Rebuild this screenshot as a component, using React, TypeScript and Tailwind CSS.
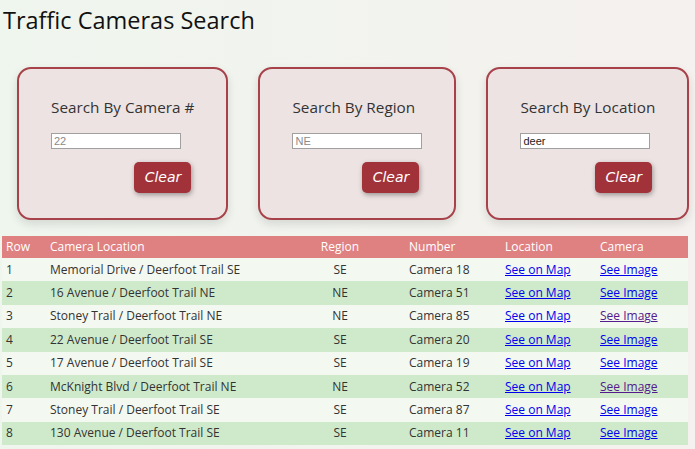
import React from 'react';

type Cam = { row: number; location: string; region: string; number: string; visited?: boolean };

const cameras: Cam[] = [
  { row: 1, location: 'Memorial Drive / Deerfoot Trail SE', region: 'SE', number: 'Camera 18' },
  { row: 2, location: '16 Avenue / Deerfoot Trail NE', region: 'NE', number: 'Camera 51' },
  { row: 3, location: 'Stoney Trail / Deerfoot Trail NE', region: 'NE', number: 'Camera 85', visited: true },
  { row: 4, location: '22 Avenue / Deerfoot Trail SE', region: 'SE', number: 'Camera 20' },
  { row: 5, location: '17 Avenue / Deerfoot Trail SE', region: 'SE', number: 'Camera 19' },
  { row: 6, location: 'McKnight Blvd / Deerfoot Trail NE', region: 'NE', number: 'Camera 52', visited: true },
  { row: 7, location: 'Stoney Trail / Deerfoot Trail SE', region: 'SE', number: 'Camera 87' },
  { row: 8, location: '130 Avenue / Deerfoot Trail SE', region: 'SE', number: 'Camera 11' },
];

function SearchCard({ title, placeholder, value }: { title: string; placeholder?: string; value?: string }) {
  return (
    <div className="flex flex-col h-[153px] border-2 border-[#a8424a] rounded-[14px] bg-[#eee3e3] shadow-[0_4px_10px_rgba(0,0,0,0.12)] px-[32px] pt-[27px]">
      <h2 className="text-[15.3px] leading-[22px] text-[#333] whitespace-nowrap">{title}</h2>
      <input
        readOnly
        value={value}
        placeholder={placeholder}
        className="mt-[15px] w-[130px] h-[16px] bg-white border border-[#a0a0a0] text-[11px] leading-[14px] px-[2px] text-[#222] placeholder:text-[#8a8a8a] font-['Liberation_Sans',sans-serif] outline-none"
      />
      <div className="flex justify-end mt-[13px] pr-[3px]">
        <button className="w-[57px] h-[31px] rounded-[5px] bg-[#a2323a] text-white italic text-[14px] font-['Comic_Sans_MS','DejaVu_Sans',cursive] shadow-[1px_2px_5px_rgba(0,0,0,0.35)]">
          Clear
        </button>
      </div>
    </div>
  );
}

export default function App() {
  return (
    <div className="min-h-[449px] w-full bg-gradient-to-r from-[#eff6ee] to-[#f5f1ee] font-['Open_Sans',sans-serif] text-[#222] overflow-hidden">
      <h1 className="text-[23.5px] leading-[40px] pl-[3px] text-[#111]">Traffic Cameras Search</h1>
      <div className="flex gap-[30px] pl-[17px] mt-[27px]">
        <SearchCard title="Search By Camera #" placeholder="22" />
        <SearchCard title="Search By Region" placeholder="NE" />
        <SearchCard title="Search By Location" value="deer" />
      </div>
      <table className="ml-[2px] mt-[16px] w-[686px] table-fixed border-collapse text-[12px] text-[#333]">
        <colgroup>
          <col className="w-[44px]" />
          <col className="w-[229px]" />
          <col className="w-[130px]" />
          <col className="w-[96px]" />
          <col className="w-[95px]" />
          <col className="w-[92px]" />
        </colgroup>
        <thead>
          <tr className="bg-[#e08181] text-white h-[22px]">
            <th className="text-left font-normal pl-[4px]">Row</th>
            <th className="text-left font-normal pl-[4px]">Camera Location</th>
            <th className="text-center font-normal">Region</th>
            <th className="text-left font-normal pl-[4px]">Number</th>
            <th className="text-left font-normal pl-[4px]">Location</th>
            <th className="text-left font-normal pl-[4px]">Camera</th>
          </tr>
        </thead>
        <tbody>
          {cameras.map((c) => (
            <tr key={c.row} className={c.row % 2 === 0 ? 'bg-[#cfeacb] h-[23.4px]' : 'bg-[#f3f8f1] h-[23.4px]'}>
              <td className="pl-[4px]">{c.row}</td>
              <td className="pl-[4px]">{c.location}</td>
              <td className="text-center">{c.region}</td>
              <td className="pl-[4px]">{c.number}</td>
              <td className="pl-[4px]">
                <a href="#" className="text-[#0000ee] underline">See on Map</a>
              </td>
              <td className="pl-[4px]">
                <a href="#" className={c.visited ? 'text-[#551a8b] underline' : 'text-[#0000ee] underline'}>See Image</a>
              </td>
            </tr>
          ))}
        </tbody>
      </table>
    </div>
  );
}
